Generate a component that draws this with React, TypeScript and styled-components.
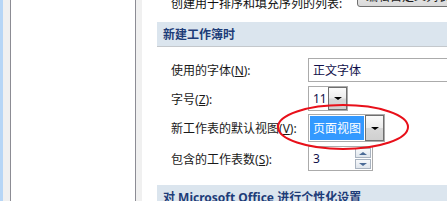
import React, { ReactElement, ReactNode } from "react";
import styled, { createGlobalStyle } from "styled-components";

const GlobalStyle = createGlobalStyle`
    html, body {
        margin: 0;
        padding: 0;
        background: #ffffff;
    }
    body {
        font-family: "Noto Sans", "Noto Sans CJK SC", sans-serif;
        font-size: 12px;
        color: #1e1e1e;
    }
`;

const Window = styled.div`
    position: relative;
    display: flex;
    width: 447px;
    height: 201px;
    overflow: hidden;
    background: #ffffff;
`;

const Strip = styled.div<{ $w: number; $bg: string }>`
    flex: 0 0 ${(p) => p.$w}px;
    background: ${(p) => p.$bg};
`;

const NavPanel = styled.div`
    flex: 0 0 124px;
    background: #ffffff;
    border-left: 1px solid #8c8c94;
    border-right: 1px solid #8c8c94;
`;

const Content = styled.div`
    flex: 1;
    min-width: 0;
    padding-left: 15px;
    display: flex;
    flex-direction: column;
`;

const TopRow = styled.div`
    display: flex;
    align-items: flex-end;
    height: 23px;
    margin-top: -16px;
    padding-left: 14px;
`;

const TopLabel = styled.span`
    flex: 0 0 186px;
    line-height: 16px;
    margin-bottom: -5px;
    white-space: nowrap;
    color: #101010;
`;

const PushButton = styled.div`
    box-sizing: border-box;
    height: 23px;
    width: 110px;
    flex: 0 0 auto;
    border: 1px solid #707070;
    border-radius: 3px;
    background: linear-gradient(#f2f2f2, #dadada);
    display: flex;
    align-items: center;
    padding-left: 8px;
    white-space: nowrap;
`;

const SectionHeader = styled.div<{ $mt: number }>`
    margin-top: ${(p) => p.$mt}px;
    flex: 0 0 auto;
    height: 24px;
    border-bottom: 1px solid #c4c8cc;
    background: #dbe5ee;
    display: flex;
    align-items: center;
    padding-left: 6px;
    font-weight: bold;
    font-size: 12px;
    color: #1d3c78;
    white-space: nowrap;
`;

const Row = styled.div<{ $mt: number; $h: number }>`
    display: grid;
    grid-template-columns: 137px 1fr;
    align-items: center;
    margin-top: ${(p) => p.$mt}px;
    height: ${(p) => p.$h}px;
    padding-left: 14px;
    flex: 0 0 auto;
`;

const Label = styled.span`
    white-space: nowrap;
    color: #1a1a1a;
`;

const Field = styled.div<{ $w: number; $h: number }>`
    box-sizing: border-box;
    width: ${(p) => p.$w}px;
    height: ${(p) => p.$h}px;
    border: 1px solid #ababab;
    background: #ffffff;
    display: flex;
    align-items: stretch;
`;

const FieldText = styled.div<{ $selected?: boolean }>`
    flex: 1;
    display: flex;
    align-items: center;
    padding-left: 3px;
    margin: 1px;
    font-size: 12px;
    color: ${(p) => (p.$selected ? "#ffffff" : "#10104a")};
    background: ${(p) => (p.$selected ? "#3399ff" : "transparent")};
    white-space: nowrap;
    overflow: hidden;
`;

const DropButton = styled.div`
    box-sizing: border-box;
    flex: 0 0 19px;
    border: 1px solid #6f6f6f;
    background: linear-gradient(#fbfbfb 0%, #ececec 48%, #d8d8d8 52%, #d0d0d0 100%);
    display: flex;
    align-items: center;
    justify-content: center;
`;

const SpinColumn = styled.div`
    flex: 0 0 16px;
    display: flex;
    flex-direction: column;
    gap: 1px;
    padding: 1px 1px 1px 0;
`;

const SpinButton = styled.div`
    flex: 1;
    box-sizing: border-box;
    border: 1px solid #a9b3c0;
    background: linear-gradient(#f7f9fb, #dfe5ec);
    display: flex;
    align-items: center;
    justify-content: center;
`;

const Arrow = styled.span<{ $up?: boolean; $color: string; $size: number }>`
    width: 0;
    height: 0;
    border-left: ${(p) => p.$size}px solid transparent;
    border-right: ${(p) => p.$size}px solid transparent;
    ${(p) =>
        p.$up
            ? `border-bottom: ${p.$size - 1}px solid ${p.$color};`
            : `border-top: ${p.$size - 1}px solid ${p.$color};`}
`;

const Ellipse = styled.svg`
    position: absolute;
    left: 276px;
    top: 103px;
    width: 134px;
    height: 48px;
    overflow: visible;
    pointer-events: none;
`;

const Mnemonic = ({ k, children }: { k: string; children: ReactNode }): ReactElement => (
    <Label>
        {children}(<u>{k}</u>):
    </Label>
);

const App = (): ReactElement => (
    <>
        <GlobalStyle />
        <Window>
            <Strip $w={3} $bg="#b7d6f6" />
            <Strip $w={7} $bg="#f0f0f0" />
            <NavPanel />
            <Strip $w={6} $bg="#f0f0f0" />
            <Content>
                <TopRow>
                    <TopLabel>创建用于排序和填充序列的列表:</TopLabel>
                    <PushButton>编辑自定义列表(O)...</PushButton>
                </TopRow>

                <SectionHeader $mt={15}>新建工作簿时</SectionHeader>

                <Row $mt={11} $h={24}>
                    <Mnemonic k="N">使用的字体</Mnemonic>
                    <Field $w={160} $h={24}>
                        <FieldText>正文字体</FieldText>
                    </Field>
                </Row>

                <Row $mt={4} $h={25}>
                    <Mnemonic k="Z">字号</Mnemonic>
                    <Field $w={40} $h={25}>
                        <FieldText>11</FieldText>
                        <DropButton>
                            <Arrow $color="#000000" $size={4} />
                        </DropButton>
                    </Field>
                </Row>

                <Row $mt={3} $h={28}>
                    <Mnemonic k="V">新工作表的默认视图</Mnemonic>
                    <Field $w={77} $h={28}>
                        <FieldText $selected>页面视图</FieldText>
                        <DropButton>
                            <Arrow $color="#000000" $size={4} />
                        </DropButton>
                    </Field>
                </Row>

                <Row $mt={4} $h={25}>
                    <Mnemonic k="S">包含的工作表数</Mnemonic>
                    <Field $w={65} $h={25}>
                        <FieldText>3</FieldText>
                        <SpinColumn>
                            <SpinButton>
                                <Arrow $up $color="#4a6a96" $size={4} />
                            </SpinButton>
                            <SpinButton>
                                <Arrow $color="#4a6a96" $size={4} />
                            </SpinButton>
                        </SpinColumn>
                    </Field>
                </Row>

                <SectionHeader $mt={14}>对 Microsoft Office 进行个性化设置</SectionHeader>
            </Content>

            <Ellipse viewBox="0 0 134 48">
                <ellipse cx="67" cy="24" rx="65" ry="22" fill="none" stroke="#e8101a" strokeWidth="2" />
            </Ellipse>
        </Window>
    </>
);

export default App;
